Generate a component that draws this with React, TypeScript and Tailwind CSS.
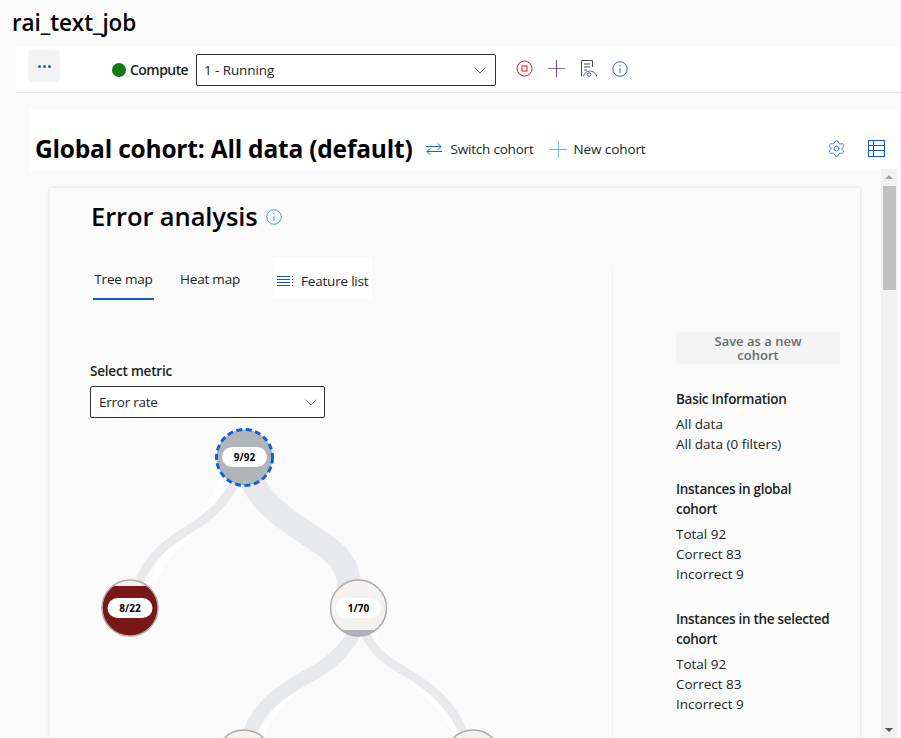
import { Settings } from "lucide-react";

const font = { fontFamily: '"Open Sans", "Noto Sans", sans-serif' };

function Chevron({ color = "#605e5c" }: { color?: string }) {
  return (
    <svg width="12" height="7" viewBox="0 0 12 7" fill="none" stroke={color} strokeWidth="1">
      <path d="M0.5 0.5 L6 6 L11.5 0.5" />
    </svg>
  );
}

function InfoIcon({ color, size = 16 }: { color: string; size?: number }) {
  return (
    <svg width={size} height={size} viewBox="0 0 16 16" fill="none" stroke={color} strokeWidth="1">
      <circle cx="8" cy="8" r="7.25" />
      <path d="M8 7 V12" />
      <circle cx="8" cy="4.8" r="0.7" fill={color} stroke="none" />
    </svg>
  );
}

function Dropdown({ label, className, chevron }: { label: string; className: string; chevron?: string }) {
  return (
    <div className={`flex items-center justify-between rounded-[2px] border border-[#323130] bg-white text-[13.5px] text-[#201f1e] ${className}`}>
      <span>{label}</span>
      <Chevron color={chevron} />
    </div>
  );
}

function InfoBlock({ title, lines }: { title: string; lines: string[] }) {
  return (
    <div className="mb-[25px]">
      <div className="mb-[5px] text-[13.5px] leading-[20px] font-semibold tracking-[-0.3px] text-[#201f1e]">{title}</div>
      {lines.map((line) => (
        <div key={line} className="text-[13.5px] leading-[20px] text-[#201f1e]">
          {line}
        </div>
      ))}
    </div>
  );
}

function TreeNode({ cx, cy, label, cap, fill }: { cx: number; cy: number; label: string; cap?: number; fill: string }) {
  const id = `clip-${cx}-${cy}`;
  return (
    <g>
      <clipPath id={id}>
        <circle cx={cx} cy={cy} r="28" />
      </clipPath>
      <circle cx={cx} cy={cy} r="28" fill="#f3f2f1" />
      {cap !== undefined && <rect x={cx - 30} y={cap} width="60" height="70" fill={fill} clipPath={`url(#${id})`} />}
      <circle cx={cx} cy={cy} r="28" fill="none" stroke="#aeaaa7" strokeWidth="1.5" />
      <rect x={cx - 22.5} y={cy - 10} width="45" height="20" rx="10" fill="#ffffff" />
      <text x={cx} y={cy + 3.5} textAnchor="middle" fontSize="10" fontWeight="700" fill="#000000">
        {label}
      </text>
    </g>
  );
}

function TreeChart() {
  return (
    <svg width="520" height="320" viewBox="90 425 520 320" className="mt-[7px] block" fill="none" style={font}>
      {/* white = correct share, gray = incorrect share of each branch */}
      <path d="M226 470 C218 495 205 515 190 532 S160 555 150 590" stroke="#ffffff" strokeWidth="7" />
      <path d="M240 470 C232 495 215 512 197 524 S150 550 138 585" stroke="#e8e9ec" strokeWidth="9" />
      <path d="M248 470 C258 505 290 522 320 542 S348 575 352 600" stroke="#e8e9ec" strokeWidth="24" />
      <path d="M348 630 C340 650 325 665 310 678 S272 710 262 735" stroke="#ffffff" strokeWidth="5" />
      <path d="M372 630 C382 650 400 670 420 688 S450 720 458 735" stroke="#ffffff" strokeWidth="5" />
      <path d="M358 625 C350 645 335 660 317 671 S258 700 250 735" stroke="#e8e9ec" strokeWidth="14" />
      <path d="M362 625 C370 650 385 660 407 673 S455 705 466 740" stroke="#e8e9ec" strokeWidth="9" />

      <circle cx="244.5" cy="457.5" r="28" fill="#b1b4ba" stroke="#0f62d6" strokeWidth="3" strokeDasharray="6 3.5" />
      <rect x="222" y="447" width="45" height="20" rx="10" fill="#ffffff" />
      <text x="244.5" y="461" textAnchor="middle" fontSize="10" fontWeight="700" fill="#000000">
        9/92
      </text>

      <TreeNode cx={130} cy={608} label="8/22" cap={586} fill="#7a1717" />
      <TreeNode cx={358.5} cy={608} label="1/70" cap={630} fill="#b1b4ba" />
      <TreeNode cx={244} cy={758} label="" fill="#f3f2f1" />
      <TreeNode cx={473} cy={758} label="" fill="#f3f2f1" />
    </svg>
  );
}

export default function App() {
  return (
    <div className="h-[738px] w-[901px] overflow-hidden bg-[#fafafa] text-[#201f1e]" style={font}>
      <h1 className="h-[47px] pt-[8px] pl-3 text-[22.5px] leading-[30px] font-semibold tracking-[-0.1px] text-black">rai_text_job</h1>

      {/* command bar */}
      <div className="ml-4 flex h-[46px] items-start border-b border-[#e0e0e0] bg-white pt-[3px]">
        <div className="ml-3 flex h-8 w-8 items-center justify-center gap-[2px] rounded bg-[#f3f3f3]">
          <span className="h-[3px] w-[3px] rounded-full bg-[#0f6cbd]" />
          <span className="h-[3px] w-[3px] rounded-full bg-[#0f6cbd]" />
          <span className="h-[3px] w-[3px] rounded-full bg-[#0f6cbd]" />
        </div>
        <div className="mt-1 ml-[52px] flex items-center">
          <span className="h-[14px] w-[14px] rounded-full bg-[#107c10]" />
          <span className="ml-[4px] w-[66px] text-sm leading-[32px] font-semibold tracking-[-0.55px]">Compute</span>
          <Dropdown label="1 - Running" className="h-8 w-[300px] pr-[9px] pl-[7px] tracking-[-0.1px]" />
        </div>
        <div className="mt-[10px] ml-[20px] flex items-center gap-[15px]">
          <svg width="17" height="17" viewBox="0 0 17 17" fill="none" stroke="#e81123" strokeWidth="1">
            <circle cx="8.5" cy="8.5" r="7.5" />
            <rect x="6" y="6" width="5" height="5" />
          </svg>
          <svg width="17" height="17" viewBox="0 0 17 17" fill="none" strokeWidth="1">
            <path d="M0 8.5 H17" stroke="#7d7d7d" />
            <path d="M8.5 0 V17" stroke="#7b3f98" />
          </svg>
          <svg width="17" height="17" viewBox="0 0 17 17" fill="none" stroke="#4a4a4a" strokeWidth="1">
            <path d="M1.5 16.5 V0.5 H12.5 V7" />
            <path d="M4 4 H10 M4 7 H10 M4 10 H7" />
            <path d="M3.5 16.5 C5 9.5 14 9 17 16.5" stroke="#4a6a8a" />
            <circle cx="9" cy="14.5" r="1.8" stroke="#4a6a8a" />
          </svg>
          <InfoIcon color="#44698f" />
        </div>
      </div>

      {/* cohort header */}
      <div className="mt-4 ml-[30px] flex h-[62px] w-[867px] items-end bg-white pb-[7px] pl-[5px]">
        <span className="text-[24.5px] leading-[30px] font-bold tracking-[-0.2px] text-black">Global cohort: All data (default)</span>
        <div className="mb-[5px] ml-[14px] flex items-center text-[13.5px] leading-[20px] tracking-[-0.2px]">
          <svg width="16" height="12" viewBox="0 0 16 12" fill="none" stroke="#0f6cbd" strokeWidth="1">
            <path d="M0 3.5 H15 M12 0.5 L15 3.5 L12 6.5 M16 8.5 H1 M4 5.5 L1 8.5 L4 11.5" />
          </svg>
          <span className="ml-2">Switch cohort</span>
          <svg className="ml-[16px]" width="17" height="17" viewBox="0 0 17 17" fill="none" strokeWidth="1">
            <path d="M0 8.5 H17" stroke="#7f9fe8" />
            <path d="M8.5 0 V17" stroke="#7fb8f0" />
          </svg>
          <span className="ml-[7px] tracking-[-0.1px]">New cohort</span>
        </div>
        <div className="mb-[6px] ml-auto flex items-center gap-[22px] pr-3">
          <Settings size={19} strokeWidth={1} color="#1a5fe0" />
          <svg width="17" height="17" viewBox="0 0 17 17" fill="none" stroke="#0f55e0" strokeWidth="1">
            <rect x="0.5" y="0.5" width="16" height="16" />
            <path d="M0.5 5.5 H16.5 M0.5 10.5 H16.5 M5.5 0.5 V16.5" />
          </svg>
        </div>
      </div>

      <div className="relative -mt-[2px] flex h-[569px]">
        {/* card */}
        <div className="mt-[19px] ml-[50px] flex h-[600px] w-[810px] bg-[#fafafa] shadow-[0_0_4px_rgba(0,0,0,0.12)]">
          <div className="w-[562px] pl-10">
            <div className="flex h-[56px] items-center pl-px">
              <span className="text-[25.5px] leading-[32px] font-semibold tracking-[-0.1px] text-black">Error analysis</span>
              <span className="mt-[2px] ml-2">
                <InfoIcon color="#4a9be8" />
              </span>
            </div>
            <div className="mt-[13px] flex h-[42px] items-start">
              <div className="mt-[11px] ml-[3px] flex h-[32px] w-[61px] justify-center border-b-2 border-[#0f62d6] pt-[1px] text-[13.5px] leading-[20px] font-medium tracking-[-0.2px]">
                Tree map
              </div>
              <div className="mt-[12px] ml-[26px] w-[60px] text-[13.5px] leading-[20px] tracking-[-0.2px] whitespace-nowrap">Heat map</div>
              <div className="ml-[33px] flex h-[42px] w-[99px] items-center bg-white pt-[7px] pl-1 text-[13.5px] tracking-[-0.2px] whitespace-nowrap">
                <svg className="-mt-[1px]" width="16" height="10" viewBox="0 0 16 10" fill="none" stroke="#0f55c8" strokeWidth="1">
                  <path d="M0 0.5 H13 M0 3.5 H13 M0 6.5 H13 M0 9.5 H13" />
                  <path d="M15.5 0 V1 M15.5 3 V4 M15.5 6 V7 M15.5 9 V10" />
                </svg>
                <span className="ml-2">Feature list</span>
              </div>
            </div>
            <div className="mt-[62px] text-[13.5px] leading-[20px] font-semibold tracking-[-0.2px]">Select metric</div>
            <Dropdown label="Error rate" className="mt-[5px] h-8 w-[235px] pr-[7px] pl-2 tracking-[-0.25px]" chevron="#a08a7a" />
            <TreeChart />
          </div>
          <div className="mt-[82px] h-[520px] border-l border-[#f0f0f0] pt-[62px] pl-[63px]">
            <div className="flex h-8 w-[164px] items-center justify-center rounded-sm bg-[#f3f3f3] text-center text-[13px] leading-[14px] font-semibold text-[#6b6b6b]">
              Save as a new
              <br />
              cohort
            </div>
            <div className="mt-[25px] w-[158px]">
              <InfoBlock title="Basic Information" lines={["All data", "All data (0 filters)"]} />
              <InfoBlock title="Instances in global cohort" lines={["Total 92", "Correct 83", "Incorrect 9"]} />
              <InfoBlock title="Instances in the selected cohort" lines={["Total 92", "Correct 83", "Incorrect 9"]} />
            </div>
          </div>
        </div>

        {/* scrollbar */}
        <div className="absolute top-0 left-[881px] flex h-[569px] w-4 flex-col items-center bg-[#f1f1f1]">
          <span className="mt-[6px] h-0 w-0 border-x-[4px] border-b-[4px] border-x-transparent border-b-[#a3a3a3]" />
          <span className="mt-[7px] h-[104px] w-[13px] bg-[#c1c1c1]" />
          <span className="mt-auto mb-[6px] h-0 w-0 border-x-[4px] border-t-[4px] border-x-transparent border-t-[#505050]" />
        </div>
      </div>
    </div>
  );
}
